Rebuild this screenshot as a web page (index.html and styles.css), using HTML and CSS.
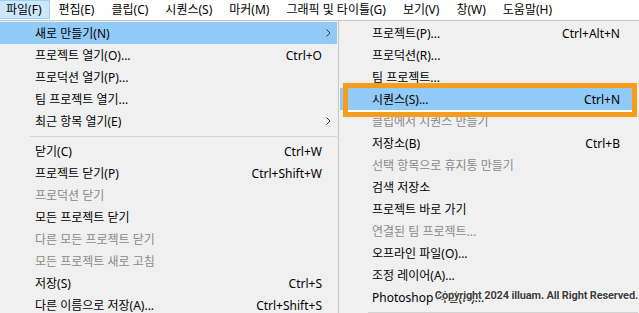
FILE: index.html
```html
<!DOCTYPE html>
<html lang="ko">
<head>
<meta charset="utf-8">
<title>파일 메뉴</title>
<link rel="stylesheet" href="styles.css">
</head>
<body>
<div class="menubar">
  <span class="mb-item active">파일(F)</span>
  <span class="mb-item">편집(E)</span>
  <span class="mb-item">클립(C)</span>
  <span class="mb-item">시퀀스(S)</span>
  <span class="mb-item">마커(M)</span>
  <span class="mb-item">그래픽 및 타이틀(G)</span>
  <span class="mb-item">보기(V)</span>
  <span class="mb-item">창(W)</span>
  <span class="mb-item">도움말(H)</span>
</div>
<div class="drop">
  <div class="menu main">
    <div class="row hl"><span class="label">새로 만들기(N)</span><svg class="arrow" width="5" height="8" viewBox="0 0 5 8"><polyline points="0.5,0.5 4,4 0.5,7.5" fill="none" stroke="#333" stroke-width="1"/></svg></div>
    <div class="row"><span class="label">프로젝트 열기(O)...</span><span class="key">Ctrl+O</span></div>
    <div class="row"><span class="label">프로덕션 열기(P)...</span></div>
    <div class="row"><span class="label">팀 프로젝트 열기...</span></div>
    <div class="row"><span class="label">최근 항목 열기(E)</span><svg class="arrow" width="5" height="8" viewBox="0 0 5 8"><polyline points="0.5,0.5 4,4 0.5,7.5" fill="none" stroke="#333" stroke-width="1"/></svg></div>
    <div class="sep"></div>
    <div class="row"><span class="label">닫기(C)</span><span class="key">Ctrl+W</span></div>
    <div class="row"><span class="label">프로젝트 닫기(P)</span><span class="key">Ctrl+Shift+W</span></div>
    <div class="row dis"><span class="label">프로덕션 닫기</span></div>
    <div class="row"><span class="label">모든 프로젝트 닫기</span></div>
    <div class="row dis"><span class="label">다른 모든 프로젝트 닫기</span></div>
    <div class="row dis"><span class="label">모든 프로젝트 새로 고침</span></div>
    <div class="row"><span class="label">저장(S)</span><span class="key">Ctrl+S</span></div>
    <div class="row"><span class="label">다른 이름으로 저장(A)...</span><span class="key">Ctrl+Shift+S</span></div>
  </div>
  <div class="menu sub">
    <div class="row"><span class="label">프로젝트(P)...</span><span class="key">Ctrl+Alt+N</span></div>
    <div class="row"><span class="label">프로덕션(R)...</span></div>
    <div class="row"><span class="label">팀 프로젝트...</span></div>
    <div class="row hl"><span class="label">시퀀스(S)...</span><span class="key">Ctrl+N</span></div>
    <div class="row dis"><span class="label">클립에서 시퀀스 만들기</span></div>
    <div class="row"><span class="label">저장소(B)</span><span class="key">Ctrl+B</span></div>
    <div class="row dis"><span class="label">선택 항목으로 휴지통 만들기</span></div>
    <div class="row"><span class="label">검색 저장소</span></div>
    <div class="row"><span class="label">프로젝트 바로 가기</span></div>
    <div class="row dis"><span class="label">연결된 팀 프로젝트...</span></div>
    <div class="row"><span class="label">오프라인 파일(O)...</span></div>
    <div class="row"><span class="label">조정 레이어(A)...</span></div>
    <div class="row"><span class="label">Photoshop 파일(H)...</span></div>
    <div class="sep"></div>
  </div>
</div>
<div class="annot"></div>
<div class="copyright">Copyright 2024 illuam. All Right Reserved.</div>
</body>
</html>
```
FILE: styles.css
```css
html, body {
  margin: 0;
  padding: 0;
  overflow: hidden;
  background: #ffffff;
}
body {
  width: 639px;
  height: 313px;
  position: relative;
  font-family: "Noto Sans", "Noto Sans CJK KR", sans-serif;
  font-size: 12px;
  color: #000;
}
.menubar {
  display: flex;
  height: 20px;
  margin-left: -2.5px;
  background: #fff;
}
.mb-item {
  box-sizing: border-box;
  height: 19px;
  line-height: 17px;
  padding: 0 7.5px;
  border: 1px solid transparent;
  white-space: nowrap;
}
.mb-item.active {
  background: #cce8ff;
  border-color: #99d1ff;
}
.drop {
  display: flex;
  height: 293px;
}
.menu {
  background: #f0f0f0;
  border-top: 1px solid #c8c8c8;
  padding-top: 1px;
}
.main {
  width: 338px;
  flex: none;
}
.sub {
  flex: 1;
  border-left: 1px solid #c8c8c8;
  padding-left: 1px;
}
.row {
  display: flex;
  align-items: center;
  height: 22px;
  white-space: nowrap;
}
.main .row {
  margin-right: 1px;
  padding-left: 35px;
  padding-right: 6px;
}
.sub .row {
  margin-right: 3px;
  padding-left: 32px;
  padding-right: 7px;
}
.label {
  flex: 1;
}
.key {
  margin-right: 9px;
}
.arrow {
  display: block;
}
.row.hl {
  background: #91c9f7;
}
.row.dis {
  color: #8a8a8a;
}
.sep {
  height: 1px;
  background: #d2d2d2;
  margin: 4px 1px 3px 30px;
}
.sub .sep {
  margin-left: 28px;
}
.annot {
  position: absolute;
  left: 343px;
  top: 83px;
  width: 294px;
  height: 34px;
  box-sizing: border-box;
  border: 5px solid #f89c1c;
  box-shadow: inset 0 -2px 0 #ffffff;
}
.copyright {
  position: absolute;
  right: 1px;
  top: 289px;
  font-family: Roboto, "Liberation Sans", sans-serif;
  font-weight: 700;
  font-size: 11px;
  line-height: 13px;
  letter-spacing: -0.15px;
  color: #3c3c3c;
  white-space: nowrap;
  text-shadow: 0 0 2px #fff, 0 0 2px #fff, 1px 1px 1px #fff, -1px -1px 1px #fff;
}
```
